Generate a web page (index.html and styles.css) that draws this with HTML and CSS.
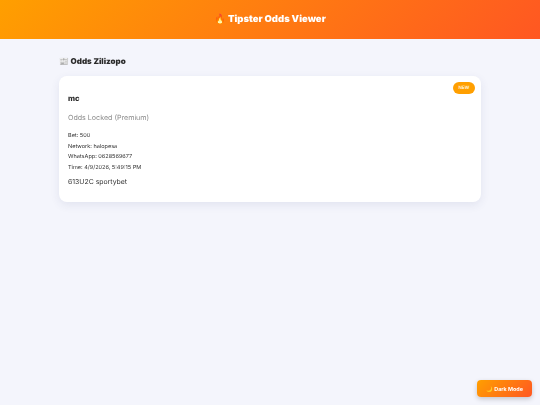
FILE: index.html
```html
<!DOCTYPE html>
<html lang="en">
<head>
<meta charset="utf-8">
<title>Tipster Odds Viewer</title>
<link rel="stylesheet" href="styles.css">
</head>
<body>
<header class="topbar"><h1 class="title"><span class="emoji">🔥</span> Tipster Odds Viewer</h1></header>
<main class="content">
  <h2 class="section-title"><span class="emoji">📰</span> Odds Zilizopo</h2>
  <article class="card">
    <span class="badge">NEW</span>
    <h3 class="author">mc</h3>
    <p class="locked">Odds Locked (Premium)</p>
    <div class="meta">
      <p>Bet: 500</p>
      <p>Network: halopesa</p>
      <p>WhatsApp: 0628569677</p>
      <p>Time: 4/9/2026, 5:49:15 PM</p>
    </div>
    <p class="code">613U2C sportybet</p>
  </article>
</main>
<button class="theme-toggle"><span class="emoji">🌙</span> Dark Mode</button>
</body>
</html>
```
FILE: styles.css
```css
* { box-sizing: border-box; }
html, body { height: 100%; }
body {
  margin: 0;
  background: #f4f5fc;
  color: #222;
  font-family: Inter, "Open Sans", "Liberation Sans", sans-serif;
  text-rendering: geometricPrecision;
}
.topbar {
  height: 39px;
  display: flex;
  align-items: center;
  justify-content: center;
  background: linear-gradient(135deg, #ff9f00, #ff5722);
}
.title {
  margin: 0;
  font-size: 9.5px;
  font-weight: 900;
  color: #fff;
  will-change: opacity;
}
.content {
  width: 422px;
  margin: 0 auto;
  padding-top: 16px;
}
.section-title {
  margin: 0 0 9px;
  height: 12px;
  line-height: 12px;
  font-size: 8px;
  font-weight: 900;
  color: #2a2a2a;
  will-change: opacity;
}
.card {
  position: relative;
  height: 126px;
  padding: 18px 9px 0;
  background: #fff;
  border-radius: 8px;
  box-shadow: 0 3px 10px rgba(40, 50, 110, .09);
}
.card > * { will-change: opacity; }
.badge {
  position: absolute;
  top: 6px;
  right: 6px;
  width: 22px;
  height: 12px;
  display: flex;
  align-items: center;
  justify-content: center;
  padding-top: 1px;
  border-radius: 6px;
  background: #ff9f00;
  color: #fff;
  font-size: 4.6px;
  font-weight: 500;
}
.author {
  margin: 0;
  height: 10px;
  line-height: 10px;
  font-size: 7.6px;
  font-weight: 800;
  color: #2a2a2a;
}
.locked {
  margin: 9px 0 0;
  height: 10px;
  line-height: 10px;
  font-size: 7.1px;
  color: #8c8c8c;
}
.meta { margin-top: 8px; }
.meta p {
  margin: 0;
  height: 10.6px;
  line-height: 10.6px;
  font-size: 5.55px;
  color: #333;
}
.code {
  margin: 3px 0 0;
  line-height: 11px;
  font-size: 6.9px;
  color: #333;
}
.theme-toggle {
  position: fixed;
  right: 8px;
  bottom: 8px;
  width: 55px;
  height: 17px;
  padding: 0;
  border: 0;
  border-radius: 4px;
  background: linear-gradient(135deg, #ff9f00, #ff5722);
  box-shadow: 0 2px 5px rgba(0, 0, 0, .2);
  color: #fff;
  font: 700 5.4px Inter, "Open Sans", sans-serif;
}
```
